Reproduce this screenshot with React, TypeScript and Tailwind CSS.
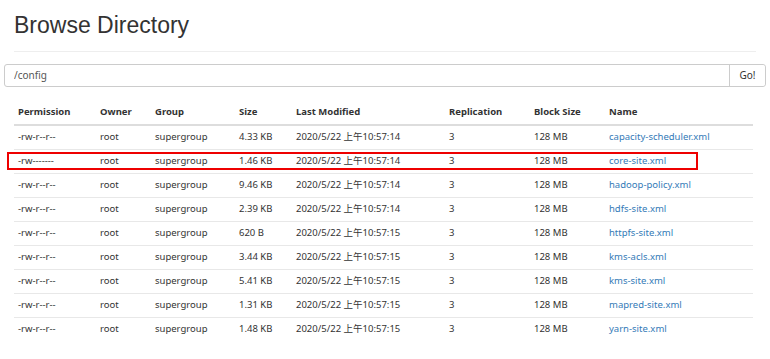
const files = [
  { perm: "-rw-r--r--", size: "4.33 KB", time: "2020/5/22 上午10:57:14", name: "capacity-scheduler.xml" },
  { perm: "-rw-------", size: "1.46 KB", time: "2020/5/22 上午10:57:14", name: "core-site.xml" },
  { perm: "-rw-r--r--", size: "9.46 KB", time: "2020/5/22 上午10:57:14", name: "hadoop-policy.xml" },
  { perm: "-rw-r--r--", size: "2.39 KB", time: "2020/5/22 上午10:57:14", name: "hdfs-site.xml" },
  { perm: "-rw-r--r--", size: "620 B", time: "2020/5/22 上午10:57:15", name: "httpfs-site.xml" },
  { perm: "-rw-r--r--", size: "3.44 KB", time: "2020/5/22 上午10:57:15", name: "kms-acls.xml" },
  { perm: "-rw-r--r--", size: "5.41 KB", time: "2020/5/22 上午10:57:15", name: "kms-site.xml" },
  { perm: "-rw-r--r--", size: "1.31 KB", time: "2020/5/22 上午10:57:15", name: "mapred-site.xml" },
  { perm: "-rw-r--r--", size: "1.48 KB", time: "2020/5/22 上午10:57:15", name: "yarn-site.xml" },
]

const headers = ["Permission", "Owner", "Group", "Size", "Last Modified", "Replication", "Block Size", "Name"]

export default function App() {
  return (
    <div className="w-[770px] h-[359px] bg-white text-[#333] overflow-hidden font-['Noto_Sans','Noto_Sans_CJK_SC',sans-serif]">
      <div className="px-[14px]">
        <h1 className="mt-[12px] text-[23px] leading-[26px] font-['Liberation_Sans',Arial,sans-serif] font-normal">
          Browse Directory
        </h1>
        <div className="mt-[13px] border-t border-[#eee]" />
      </div>

      <div className="mt-[12px] px-[4px]">
        <div className="flex h-[23px] border border-[#ccc] rounded-[3px] text-[10px]">
          <input
            readOnly
            defaultValue="/config"
            className="flex-1 px-[9px] outline-none text-[#555] bg-transparent"
          />
          <button className="w-[36px] border-l border-[#ccc] text-[#333] bg-white rounded-r-[3px]">Go!</button>
        </div>
      </div>

      <div className="relative mt-[14px] px-[14px] pr-[17px]">
        <table className="w-full table-fixed border-collapse text-[9.5px]">
          <colgroup>
            <col className="w-[82px]" />
            <col className="w-[55px]" />
            <col className="w-[84px]" />
            <col className="w-[57px]" />
            <col className="w-[153px]" />
            <col className="w-[85px]" />
            <col className="w-[75px]" />
            <col />
          </colgroup>
          <thead>
            <tr className="h-[24px]">
              {headers.map((h) => (
                <th key={h} className="text-left font-bold pl-[4px] border-b-2 border-[#ddd] whitespace-nowrap">
                  {h}
                </th>
              ))}
            </tr>
          </thead>
          <tbody>
            {files.map((f) => (
              <tr key={f.name} className="h-[24px]">
                <td className="pl-[4px] border-t border-[#e8e8e8]">{f.perm}</td>
                <td className="pl-[4px] border-t border-[#e8e8e8]">root</td>
                <td className="pl-[4px] border-t border-[#e8e8e8]">supergroup</td>
                <td className="pl-[4px] border-t border-[#e8e8e8] whitespace-nowrap">{f.size}</td>
                <td className="pl-[4px] border-t border-[#e8e8e8] whitespace-nowrap">{f.time}</td>
                <td className="pl-[4px] border-t border-[#e8e8e8]">3</td>
                <td className="pl-[4px] border-t border-[#e8e8e8]">128 MB</td>
                <td className="pl-[4px] border-t border-[#e8e8e8] whitespace-nowrap">
                  <a href="#" className="text-[#337ab7]">{f.name}</a>
                </td>
              </tr>
            ))}
          </tbody>
        </table>
        <div className="absolute left-[7px] top-[51px] w-[691px] h-[18px] border-2 border-[#ee0000]" />
      </div>
    </div>
  )
}
